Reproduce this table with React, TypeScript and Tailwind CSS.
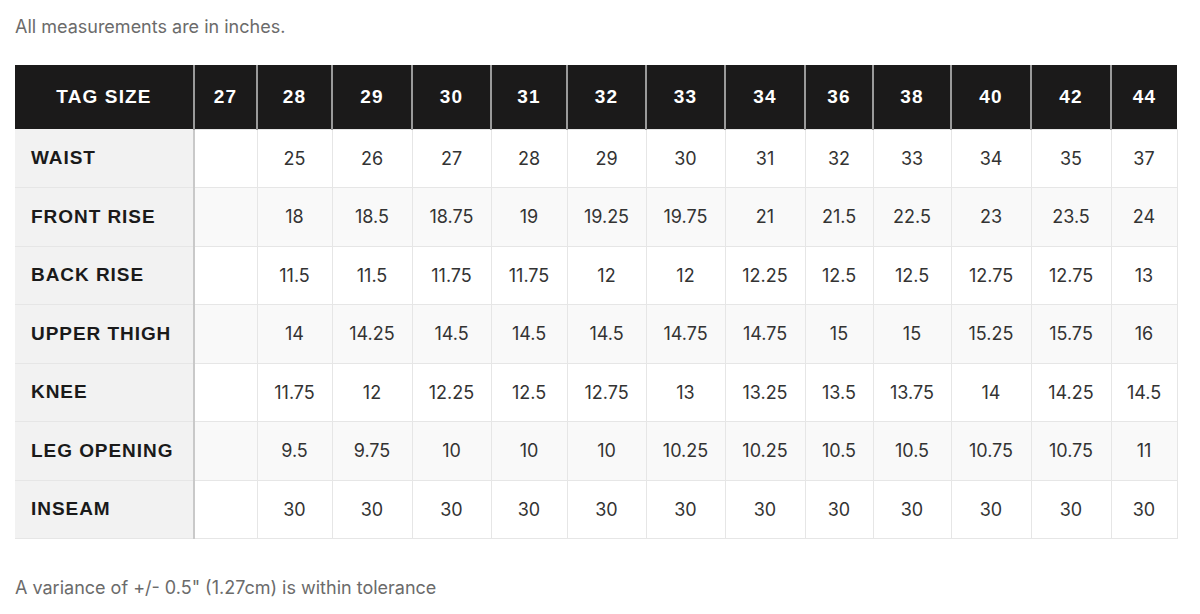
import React from 'react';

const sizes = ['27', '28', '29', '30', '31', '32', '33', '34', '36', '38', '40', '42', '44'];
const colWidths = [179, 63, 75, 80, 79, 76, 79, 79, 80, 68, 78, 80, 80, 66];

const rows: { label: string; values: string[] }[] = [
  { label: 'WAIST', values: ['', '25', '26', '27', '28', '29', '30', '31', '32', '33', '34', '35', '37'] },
  { label: 'FRONT RISE', values: ['', '18', '18.5', '18.75', '19', '19.25', '19.75', '21', '21.5', '22.5', '23', '23.5', '24'] },
  { label: 'BACK RISE', values: ['', '11.5', '11.5', '11.75', '11.75', '12', '12', '12.25', '12.5', '12.5', '12.75', '12.75', '13'] },
  { label: 'UPPER THIGH', values: ['', '14', '14.25', '14.5', '14.5', '14.5', '14.75', '14.75', '15', '15', '15.25', '15.75', '16'] },
  { label: 'KNEE', values: ['', '11.75', '12', '12.25', '12.5', '12.75', '13', '13.25', '13.5', '13.75', '14', '14.25', '14.5'] },
  { label: 'LEG OPENING', values: ['', '9.5', '9.75', '10', '10', '10', '10.25', '10.25', '10.5', '10.5', '10.75', '10.75', '11'] },
  { label: 'INSEAM', values: ['', '30', '30', '30', '30', '30', '30', '30', '30', '30', '30', '30', '30'] },
];

export default function App() {
  return (
    <div className="min-h-[614px] bg-white px-[15px] pt-[15px] font-['Inter',sans-serif]">
      <p className="text-[18px] leading-6 text-[#6b6b6b]">All measurements are in inches.</p>

      <table className="mt-[26px] table-fixed border-collapse" style={{ width: 1162 }}>
        <colgroup>
          {colWidths.map((w, i) => (
            <col key={i} style={{ width: w }} />
          ))}
        </colgroup>
        <thead>
          <tr className="h-[64px] bg-[#1b1a1a] font-['Liberation_Sans',Arial,sans-serif] text-[19px] font-bold tracking-[0.06em] text-white">
            <th className="border-r-2 border-[#9a9a9a] text-center">TAG SIZE</th>
            {sizes.map((s) => (
              <th key={s} className="border-x-2 border-[#9a9a9a] text-center last:border-r-0">
                {s}
              </th>
            ))}
          </tr>
        </thead>
        <tbody>
          {rows.map((row, r) => (
            <tr key={row.label} className={r % 2 === 1 ? 'h-[58.5px] bg-[#f9f9f9]' : 'h-[58.5px] bg-white'}>
              <td className="border-r-2 border-b border-r-[#c9c9c9] border-b-[#e6e6e6] bg-[#f2f2f2] pl-4 font-['Liberation_Sans',Arial,sans-serif] text-[19px] font-bold tracking-[0.05em] text-[#1a1a1a]">
                {row.label}
              </td>
              {row.values.map((v, i) => (
                <td key={i} className="border border-[#e6e6e6] text-center text-[18px] text-[#333333]">
                  {v}
                </td>
              ))}
            </tr>
          ))}
        </tbody>
      </table>

      <p className="mt-[37px] text-[18px] leading-6 text-[#6b6b6b]">A variance of +/- 0.5" (1.27cm) is within tolerance</p>
    </div>
  );
}
